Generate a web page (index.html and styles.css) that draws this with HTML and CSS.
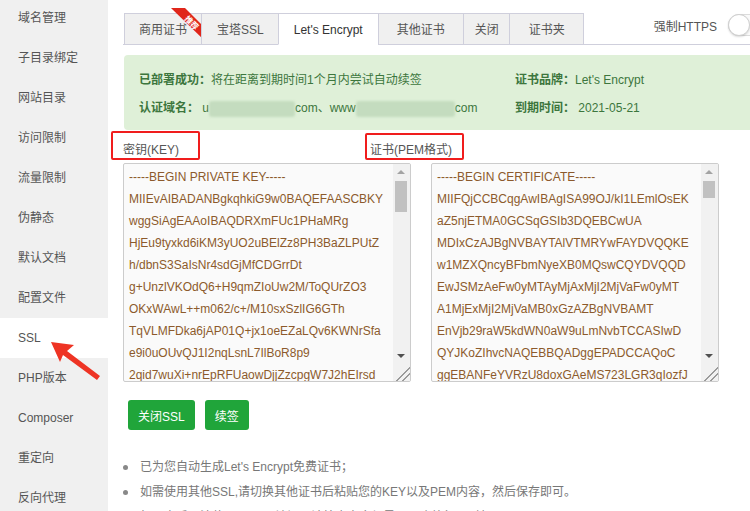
FILE: index.html
```html
<!DOCTYPE html>
<html lang="zh-CN">
<head>
    <meta charset="UTF-8">
    <title>网站设置 - SSL</title>
    <link rel="stylesheet" href="styles.css">
</head>
<body>
    <div class="layout">
        <ul class="side">
            <li>域名管理</li>
            <li>子目录绑定</li>
            <li>网站目录</li>
            <li>访问限制</li>
            <li>流量限制</li>
            <li>伪静态</li>
            <li>默认文档</li>
            <li>配置文件</li>
            <li class="on">SSL</li>
            <li>PHP版本</li>
            <li>Composer</li>
            <li>重定向</li>
            <li>反向代理</li>
        </ul>

        <div class="main">
            <div class="tab-bar">
                <ul class="tabs">
                    <li class="t-biz">商用证书
                        <svg class="badge" width="34" height="36" viewBox="0 0 34 36">
                            <polygon points="30,32 34,32 34,36" fill="#8e1710"/>
                            <polygon points="0,0 14,0 34,20 34,33" fill="#e0261b"/>
                            <text x="21" y="17" transform="rotate(45 20 14)" font-size="8" fill="#fff" text-anchor="middle">推荐</text>
                        </svg>
                    </li>
                    <li class="t-bt">宝塔SSL</li>
                    <li class="on">Let's Encrypt</li>
                    <li class="t-other">其他证书</li>
                    <li class="t-close">关闭</li>
                    <li class="t-folder">证书夹</li>
                </ul>
                <div class="https">强制HTTPS <span class="switch"><span class="knob"></span></span></div>
            </div>

            <!-- 证书状态 -->
            <div class="state">
                <p><b>已部署成功：</b>将在距离到期时间1个月内尝试自动续签</p>
                <p><b>证书品牌：</b>Let's Encrypt</p>
                <p><b>认证域名：</b> u<span class="blur b1"></span>com、www<span class="blur b2"></span>com</p>
                <p><b>到期时间：</b> 2021-05-21</p>
            </div>

            <div class="labels">
                <span class="lbl key">密钥(KEY)<i class="mark"></i></span>
                <span class="lbl pem">证书(PEM格式)<i class="mark"></i></span>
            </div>

            <div class="boxes">
                <div class="box">
<textarea wrap="off" spellcheck="false">-----BEGIN PRIVATE KEY-----
MIIEvAIBADANBgkqhkiG9w0BAQEFAASCBKY
wggSiAgEAAoIBAQDRXmFUc1PHaMRg
HjEu9tyxkd6iKM3yUO2uBElZz8PH3BaZLPUtZ
h/dbnS3SaIsNr4sdGjMfCDGrrDt
g+UnzlVKOdQ6+H9qmZIoUw2M/ToQUrZO3
OKxWAwL++m062/c+/M10sxSzlIG6GTh
TqVLMFDka6jAP01Q+jx1oeEZaLQv6KWNrSfa
e9i0uOUvQJ1I2nqLsnL7IlBoR8p9
2qid7wuXi+nrEpRFUaowDjjZzcpgW7J2hEIrsd
Kf3pQ8mZ1sVt6yBw0LcN4uRj7HxGa
aT5nW2dEq9YkF8rMbL3oPzV1xUc6
-----END PRIVATE KEY-----</textarea>
                    <div class="sbar">
                        <span class="up"></span>
                        <span class="track"><i class="thumb"></i></span>
                        <span class="down"></span>
                        <span class="grip"></span>
                    </div>
                </div>
                <div class="box">
<textarea wrap="off" spellcheck="false">-----BEGIN CERTIFICATE-----
MIIFQjCCBCqgAwIBAgISA99OJ/kI1LEmlOsEK
aZ5njETMA0GCSqGSIb3DQEBCwUA
MDIxCzAJBgNVBAYTAlVTMRYwFAYDVQQKE
w1MZXQncyBFbmNyeXB0MQswCQYDVQQD
EwJSMzAeFw0yMTAyMjAxMjI2MjVaFw0yMT
A1MjExMjI2MjVaMB0xGzAZBgNVBAMT
EnVjb29raW5kdWN0aW9uLmNvbTCCASIwD
QYJKoZIhvcNAQEBBQADggEPADCCAQoC
ggEBANFeYVRzU8doxGAeMS723LGR3qIozfJ
Ht4Wm8Kp1Zs6Qb3Yx0Ld9Vc5Ra2
-----END CERTIFICATE-----</textarea>
                    <div class="sbar">
                        <span class="up"></span>
                        <span class="track"><i class="thumb small"></i></span>
                        <span class="down"></span>
                        <span class="grip"></span>
                    </div>
                </div>
            </div>

            <div class="btns">
                <button>关闭SSL</button>
                <button>续签</button>
            </div>

            <ul class="tips">
                <li>已为您自动生成Let's Encrypt免费证书；</li>
                <li>如需使用其他SSL,请切换其他证书后粘贴您的KEY以及PEM内容，然后保存即可。</li>
                <li>如开启后无法使用HTTPS访问，请检查安全组是否正确放行443端口</li>
            </ul>
        </div>
    </div>

    <!-- 标注箭头 -->
    <svg class="arrow" width="120" height="400" viewBox="0 0 120 400">
        <polygon points="51,342 74,345 67,351 100,376 97,380 63,355 60,362" fill="#ee3424"/>
    </svg>
</body>
</html>
```

FILE: styles.css
```css
html, body {
    margin: 0;
    overflow: hidden;
    background: #fff;
    font-family: "Liberation Sans", "Noto Sans CJK SC", sans-serif;
    font-size: 12px;
    color: #555;
}
ul {
    margin: 0;
    padding: 0;
    list-style: none;
}
.layout {
    display: flex;
    width: 780px;
    height: 511px;
}
.side {
    flex: 0 0 108px;
    margin-top: -2px;
    background: #f0f0f0;
}
.side li {
    height: 40px;
    line-height: 40px;
    padding-left: 18px;
    color: #555;
}
.side li.on {
    background: #fff;
}
.main {
    flex: 0 0 668px;
    box-sizing: border-box;
    padding: 13px 0 0 15px;
}
.tab-bar {
    display: flex;
    align-items: flex-end;
    border-bottom: 1px solid #cfcfdc;
}
.tabs {
    display: flex;
    margin-left: 1px;
}
.tabs li {
    position: relative;
    height: 30px;
    line-height: 32px;
    padding: 0 14px;
    margin-bottom: -1px;
    margin-left: -1px;
    border: 1px solid #cfcfdc;
    background: #f0f0f0;
    color: #555;
    font-size: 12px;
}
.tabs li:first-child {
    margin-left: 0;
}
.tabs li.on {
    background: #fff;
    border-bottom-color: #fff;
    color: #333;
    padding: 0 15px;
}
.tabs .t-bt {
    padding: 0 14px 0 15px;
}
.tabs .t-other {
    padding: 0 18px;
}
.tabs .t-close {
    padding: 0 10px 0 11px;
}
.tabs .t-folder {
    padding: 0 18px 0 19px;
}
.badge {
    position: absolute;
    top: -6px;
    right: -4px;
}
.badge text {
    font-family: "Noto Sans CJK SC", sans-serif;
    font-weight: bold;
}
.https {
    display: flex;
    align-items: center;
    gap: 11px;
    margin-left: auto;
    align-self: flex-start;
    margin-top: 1px;
    color: #555;
}
.switch {
    position: relative;
    width: 48px;
    height: 22px;
    border: 1px solid #dcdcdc;
    border-radius: 12px;
    background: #fafafa;
    box-sizing: border-box;
}
.knob {
    position: absolute;
    left: -1px;
    top: -1px;
    width: 22px;
    height: 22px;
    border-radius: 50%;
    background: #fff;
    border: 1px solid #cfcfcf;
    box-sizing: border-box;
    box-shadow: 0 1px 2px rgba(0, 0, 0, 0.15);
}
.state {
    display: grid;
    grid-template-columns: 376px 1fr;
    margin: 10px -12px 0 1px;
    padding: 11px 15px 8px;
    background: #dff0d8;
    border-radius: 4px;
    color: #3c763d;
    line-height: 28px;
}
.state p {
    margin: 0;
    white-space: nowrap;
}
.blur {
    display: inline-block;
    height: 16px;
    vertical-align: middle;
    background: #c4dcbf;
    border-radius: 3px;
    filter: blur(1px);
}
.b1 {
    width: 86px;
}
.b2 {
    width: 99px;
}
.labels {
    display: flex;
    margin-top: 10px;
    line-height: 20px;
    font-size: 12px;
    color: #555;
}
.lbl {
    position: relative;
}
.key {
    width: 247px;
}
.mark {
    position: absolute;
    border: 2px solid #f01d1d;
    border-radius: 2px;
    box-sizing: border-box;
}
.key .mark {
    left: -12px;
    top: -9px;
    width: 89px;
    height: 29px;
}
.pem .mark {
    left: -5px;
    top: -7px;
    width: 99px;
    height: 27px;
}
.boxes {
    display: flex;
    gap: 20px;
    margin-top: 3px;
}
.box {
    display: flex;
    width: 288px;
    height: 219px;
    box-sizing: border-box;
    border: 1px solid #ccc;
    border-radius: 2px;
    background: #fafafa;
    overflow: hidden;
}
.box textarea {
    flex: 1;
    min-width: 0;
    margin: 0;
    padding: 2px 5px;
    border: none;
    background: transparent;
    color: #8c5a2c;
    font-family: "Liberation Sans", "Noto Sans CJK SC", sans-serif;
    font-size: 12px;
    line-height: 22px;
    white-space: pre;
    overflow: hidden;
    resize: none;
    outline: none;
}
.sbar {
    display: flex;
    flex-direction: column;
    width: 17px;
    background: #f1f1f1;
}
.up,
.down {
    position: relative;
    height: 17px;
}
.up::after,
.down::after {
    content: "";
    position: absolute;
    left: 4px;
    border-left: 4px solid transparent;
    border-right: 4px solid transparent;
}
.up::after {
    top: 6px;
    border-bottom: 4px solid #a3a3a3;
}
.down::after {
    top: 7px;
    border-top: 4px solid #505050;
}
.track {
    flex: 1;
    padding: 0 3px 0 2px;
}
.thumb {
    display: block;
    height: 31px;
    background: #c1c1c1;
}
.thumb.small {
    height: 17px;
}
.grip {
    height: 17px;
    background: linear-gradient(135deg, transparent 58%, #9a9a9a 58%, #9a9a9a 63%, transparent 63%, transparent 76%, #9a9a9a 76%, #9a9a9a 81%, transparent 81%);
}
.btns {
    display: flex;
    gap: 10px;
    margin: 18px 0 0 5px;
}
.btns button {
    height: 30px;
    padding: 0 10px;
    border: none;
    border-radius: 3px;
    background: #20a53a;
    color: #fff;
    font-family: "Liberation Sans", "Noto Sans CJK SC", sans-serif;
    font-size: 12px;
}
.tips {
    margin-top: 25px;
    padding-left: 17px;
}
.tips li {
    position: relative;
    line-height: 25px;
    color: #777;
    white-space: nowrap;
}
.tips li::before {
    content: "";
    position: absolute;
    left: -17px;
    top: 10px;
    width: 5px;
    height: 5px;
    border-radius: 50%;
    background: #888;
}
.arrow {
    position: absolute;
    left: 0;
    top: 0;
    pointer-events: none;
}
```
